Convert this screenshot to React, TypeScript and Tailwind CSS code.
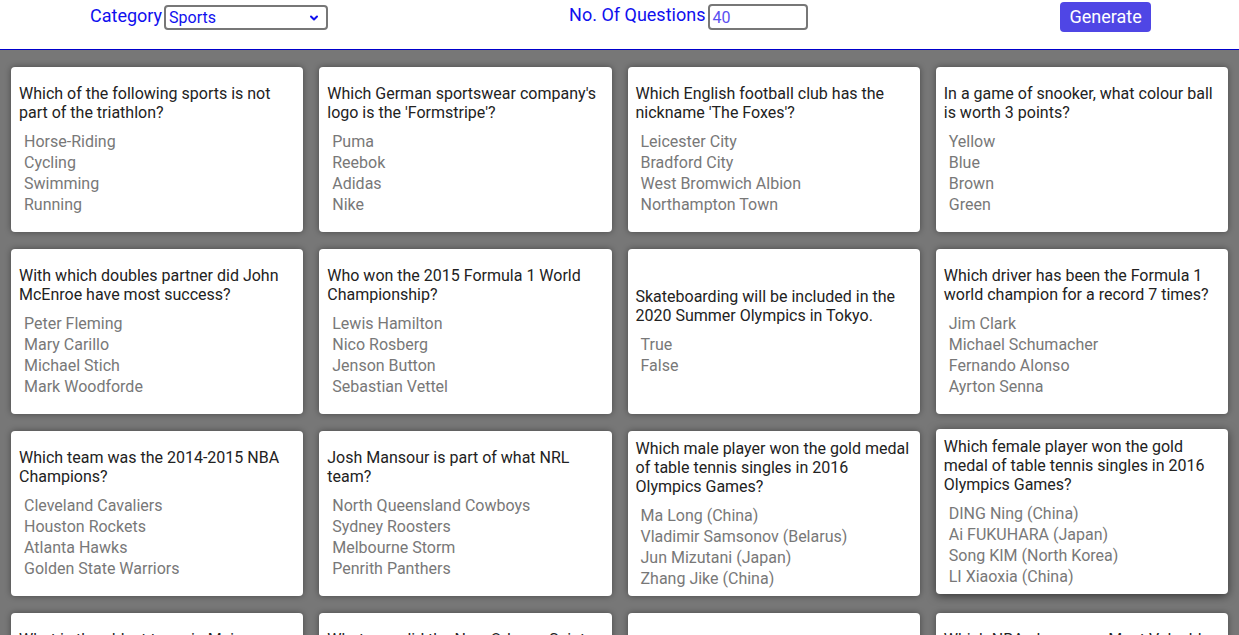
import React from "react";
import { ChevronDown } from "lucide-react";

interface Question {
  question: string;
  answers: string[];
}

const questions: Question[] = [
  {
    question: "Which of the following sports is not part of the triathlon?",
    answers: ["Horse-Riding", "Cycling", "Swimming", "Running"],
  },
  {
    question: "Which German sportswear company's logo is the 'Formstripe'?",
    answers: ["Puma", "Reebok", "Adidas", "Nike"],
  },
  {
    question: "Which English football club has the nickname 'The Foxes'?",
    answers: ["Leicester City", "Bradford City", "West Bromwich Albion", "Northampton Town"],
  },
  {
    question: "In a game of snooker, what colour ball is worth 3 points?",
    answers: ["Yellow", "Blue", "Brown", "Green"],
  },
  {
    question: "With which doubles partner did John McEnroe have most success?",
    answers: ["Peter Fleming", "Mary Carillo", "Michael Stich", "Mark Woodforde"],
  },
  {
    question: "Who won the 2015 Formula 1 World Championship?",
    answers: ["Lewis Hamilton", "Nico Rosberg", "Jenson Button", "Sebastian Vettel"],
  },
  {
    question: "Skateboarding will be included in the 2020 Summer Olympics in Tokyo.",
    answers: ["True", "False"],
  },
  {
    question: "Which driver has been the Formula 1 world champion for a record 7 times?",
    answers: ["Jim Clark", "Michael Schumacher", "Fernando Alonso", "Ayrton Senna"],
  },
  {
    question: "Which team was the 2014-2015 NBA Champions?",
    answers: ["Cleveland Cavaliers", "Houston Rockets", "Atlanta Hawks", "Golden State Warriors"],
  },
  {
    question: "Josh Mansour is part of what NRL team?",
    answers: ["North Queensland Cowboys", "Sydney Roosters", "Melbourne Storm", "Penrith Panthers"],
  },
  {
    question: "Which male player won the gold medal of table tennis singles in 2016 Olympics Games?",
    answers: ["Ma Long (China)", "Vladimir Samsonov (Belarus)", "Jun Mizutani (Japan)", "Zhang Jike (China)"],
  },
  {
    question: "Which female player won the gold medal of table tennis singles in 2016 Olympics Games?",
    answers: ["DING Ning (China)", "Ai FUKUHARA (Japan)", "Song KIM (North Korea)", "LI Xiaoxia (China)"],
  },
  {
    question: "What is the oldest team in Major League Baseball?",
    answers: ["Atlanta Braves", "Chicago Cubs", "Cincinnati Reds", "St. Louis Cardinals"],
  },
  {
    question: "What year did the New Orleans Saints win the Super Bowl?",
    answers: ["2010", "2008", "2009", "2011"],
  },
  {
    question: "Tennis was first played in the Olympics in 1896.",
    answers: ["True", "False"],
  },
  {
    question: "Which NBA player won Most Valuable Player for the 1999-2000 season?",
    answers: ["Shaquille O'Neal", "Allen Iverson", "Kobe Bryant", "Paul Pierce"],
  },
];

const HOVERED = 11;

const App: React.FC = () => {
  return (
    <div
      className="min-h-screen bg-[#777777]"
      style={{ fontFamily: "Roboto, 'Liberation Sans', sans-serif" }}
    >
      <header className="h-[50px] bg-white border-b border-[#0000cc] flex items-start pl-[90px]">
        <div className="flex items-start mt-[4px]">
          <label className="text-[18px] leading-[24px] text-[#1010ee] mr-[2px]">Category</label>
          <div className="relative mt-[1px]">
            <select
              defaultValue="Sports"
              className="appearance-none w-[164px] h-[25px] border-2 border-[#777777] rounded-[4px] pl-[3px] text-[16px] leading-[20px] text-[#1010ee] bg-white outline-none"
            >
              <option>Sports</option>
            </select>
            <ChevronDown
              className="absolute right-[8px] top-[7px] w-[12px] h-[12px] text-[#1010ee] pointer-events-none"
              strokeWidth={4}
            />
          </div>
        </div>

        <div className="flex items-start ml-[241px] mt-[3px]">
          <label className="text-[18px] leading-[24px] text-[#1010ee] mr-[3px]">No. Of Questions</label>
          <input
            type="text"
            defaultValue="40"
            className="w-[100px] h-[26px] mt-[1px] border-2 border-[#777777] rounded-[4px] pl-[2px] text-[16px] text-[#5a4ff0] bg-white outline-none"
          />
        </div>

        <button className="ml-[252px] mt-[2px] h-[30px] px-[9px] rounded-[4px] bg-[#4f46e5] text-white text-[18px] leading-[30px]">
          Generate
        </button>
      </header>

      <main className="grid grid-cols-4 gap-x-4 gap-y-[17px] px-[11px] pt-[17px] pb-6">
        {questions.map((q, i) => (
          <div
            key={i}
            className={
              i === HOVERED
                ? "h-[165px] bg-white rounded-[4px] flex flex-col justify-center px-2 -translate-y-[2px] shadow-[0_2px_10px_rgba(0,0,0,0.55)]"
                : "h-[165px] bg-white rounded-[4px] flex flex-col justify-center px-2 shadow-[0_0_6px_rgba(0,0,0,0.4)]"
            }
          >
            <p className="text-[16px] leading-[19px] text-[#222222]">{q.question}</p>
            <ul className="mt-[9px] pl-[5px]">
              {q.answers.map((a) => (
                <li key={a} className="text-[16px] leading-[21px] text-[#787878]">
                  {a}
                </li>
              ))}
            </ul>
          </div>
        ))}
      </main>
    </div>
  );
};

export default App;
